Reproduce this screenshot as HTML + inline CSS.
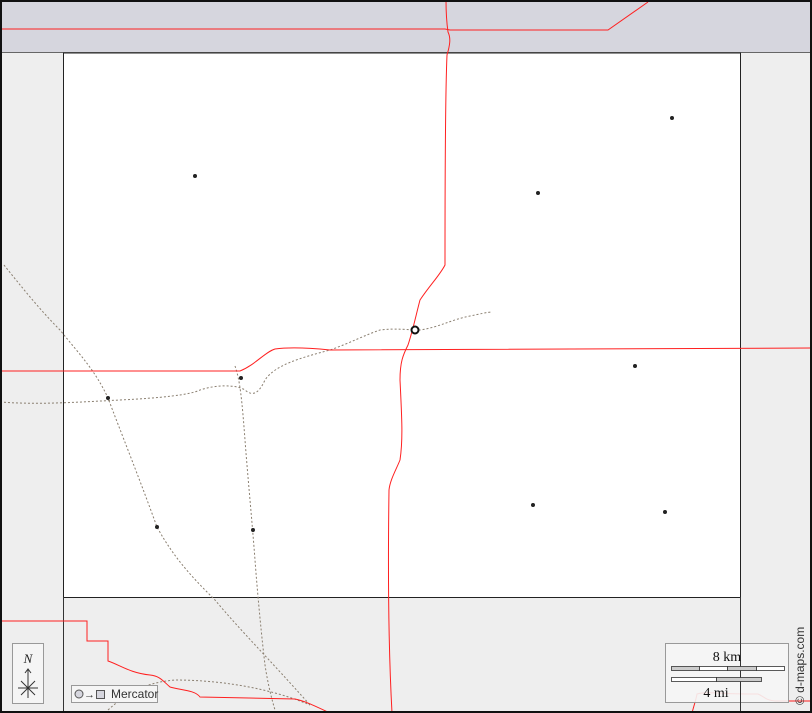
<!DOCTYPE html>
<html><head><meta charset="utf-8"><style>
html,body{margin:0;padding:0;background:#fff}
svg{display:block}
</style></head><body>
<svg width="812" height="713" viewBox="0 0 812 713" xmlns="http://www.w3.org/2000/svg" font-family="Liberation Serif, serif">
<rect x="0" y="0" width="812" height="713" fill="#eeeeee"/>
<rect x="0" y="0" width="812" height="52" fill="#d6d6de"/>
<line x1="0" y1="52.5" x2="812" y2="52.5" stroke="#666" stroke-width="1"/>
<rect x="63.5" y="53" width="677" height="544.5" fill="#fff" stroke="#222" stroke-width="1"/>
<line x1="63.5" y1="597" x2="63.5" y2="713" stroke="#333"/>
<line x1="740.5" y1="597" x2="740.5" y2="713" stroke="#333"/>
<g fill="none" stroke="#8a7f70" stroke-width="1" stroke-dasharray="2,2">
<path d="M4,265 C20,285 40,310 60,330 C80,355 95,370 108,398 C120,430 140,480 157,527 C175,560 195,580 215,600 C240,630 270,660 310,705"/>
<path d="M0,402 C40,405 80,402 120,400 C160,398 190,395 200,390 C215,385 235,384 245,390 C252,396 258,395 265,380 C275,365 300,358 330,350 C350,343 365,335 380,330 C395,328 410,330 420,330 C440,327 450,320 470,316 C480,314 488,312 492,312"/>
<path d="M235,366 C240,380 242,400 245,440 C248,480 252,520 255,560 C258,600 262,640 265,665 C268,685 272,700 275,710"/>
<path d="M108,710 C130,690 150,682 175,680 C220,680 270,688 310,705"/>
</g>
<g fill="none" stroke="#ff2020" stroke-width="1">
<path d="M0,29 L445,29 L450,30 L608,30 L648,2"/>
<path d="M446,0 C446,15 447,25 448,32 C451,38 450,45 447,55 C445,100 445,200 445,265 C440,275 430,285 420,300 C416,315 413,330 408,345 C403,355 400,362 400,380 C402,420 403,440 400,460 C396,470 390,480 389,490 C388,560 388,640 392,713"/>
<path d="M0,371 L240,371 C255,365 265,352 275,349 C290,347 310,348 330,350 L812,348"/>
<path d="M0,621 L87,621 L87,641 L108,641 L108,661 C120,665 130,673 150,675 C160,676 163,681 170,687 C180,690 195,690 200,697 L295,699 C305,701 315,706 330,713"/>
<path d="M692,713 C694,705 696,700 697,694 C705,692 712,693 720,693 C730,694 740,694 758,694 C765,697 765,700 775,701 L812,701"/>
</g>
<g fill="#222">
<circle cx="195" cy="176" r="2"/><circle cx="538" cy="193" r="2"/><circle cx="672" cy="118" r="2"/>
<circle cx="241" cy="378" r="2"/><circle cx="108" cy="398" r="2"/><circle cx="635" cy="366" r="2"/>
<circle cx="157" cy="527" r="2"/><circle cx="253" cy="530" r="2"/><circle cx="533" cy="505" r="2"/>
<circle cx="665" cy="512" r="2"/>
</g>
<circle cx="415" cy="330" r="3.5" fill="#fff" stroke="#111" stroke-width="2"/>
<rect x="12.5" y="643.5" width="31" height="60" fill="#f5f5f5" stroke="#999"/>
<text x="28" y="663" font-size="13" font-style="italic" text-anchor="middle" fill="#222">N</text>
<g stroke="#333" stroke-width="1" fill="none">
<line x1="28" y1="670" x2="28" y2="698"/><line x1="18" y1="688" x2="38" y2="688"/>
<line x1="21" y1="681" x2="35" y2="695"/><line x1="35" y1="681" x2="21" y2="695"/>
<path d="M25,673 L28,669 L31,673"/>
</g>
<rect x="71.5" y="685.5" width="86" height="17" fill="#f5f5f5" stroke="#999"/>
<circle cx="79" cy="694" r="4" fill="#d6d6de" stroke="#555"/>
<text x="84" y="698" font-size="11" font-family="Liberation Sans, sans-serif" fill="#333">→</text>
<rect x="96.5" y="690.5" width="8" height="8" fill="#d6d6de" stroke="#555"/>
<text x="111" y="698" font-size="12" font-family="Liberation Sans, sans-serif" fill="#333">Mercator</text>
<rect x="665.5" y="643.5" width="123" height="59" fill="#f5f5f5" fill-opacity="0.9" stroke="#999"/>
<line x1="740.5" y1="643" x2="740.5" y2="713" stroke="#333"/>
<text x="727" y="661" font-size="14" text-anchor="middle" fill="#111">8 km</text>
<rect x="671.5" y="666.5" width="28" height="4" fill="#ccc" stroke="#333" stroke-width="0.8"/>
<rect x="699.5" y="666.5" width="28" height="4" fill="#fff" stroke="#333" stroke-width="0.8"/>
<rect x="727.5" y="666.5" width="29" height="4" fill="#ccc" stroke="#333" stroke-width="0.8"/>
<rect x="756.5" y="666.5" width="28" height="4" fill="#fff" stroke="#333" stroke-width="0.8"/>
<rect x="671.5" y="677.5" width="45" height="4" fill="#fff" stroke="#333" stroke-width="0.8"/>
<rect x="716.5" y="677.5" width="45" height="4" fill="#ccc" stroke="#333" stroke-width="0.8"/>
<text x="716" y="697" font-size="14" text-anchor="middle" fill="#111">4 mi</text>
<text transform="translate(804,705) rotate(-90)" font-size="12" font-family="Liberation Sans, sans-serif" fill="#333">© d-maps.com</text>
<rect x="1" y="1" width="810" height="711" fill="none" stroke="#111" stroke-width="2"/>
</svg>
</body></html>
